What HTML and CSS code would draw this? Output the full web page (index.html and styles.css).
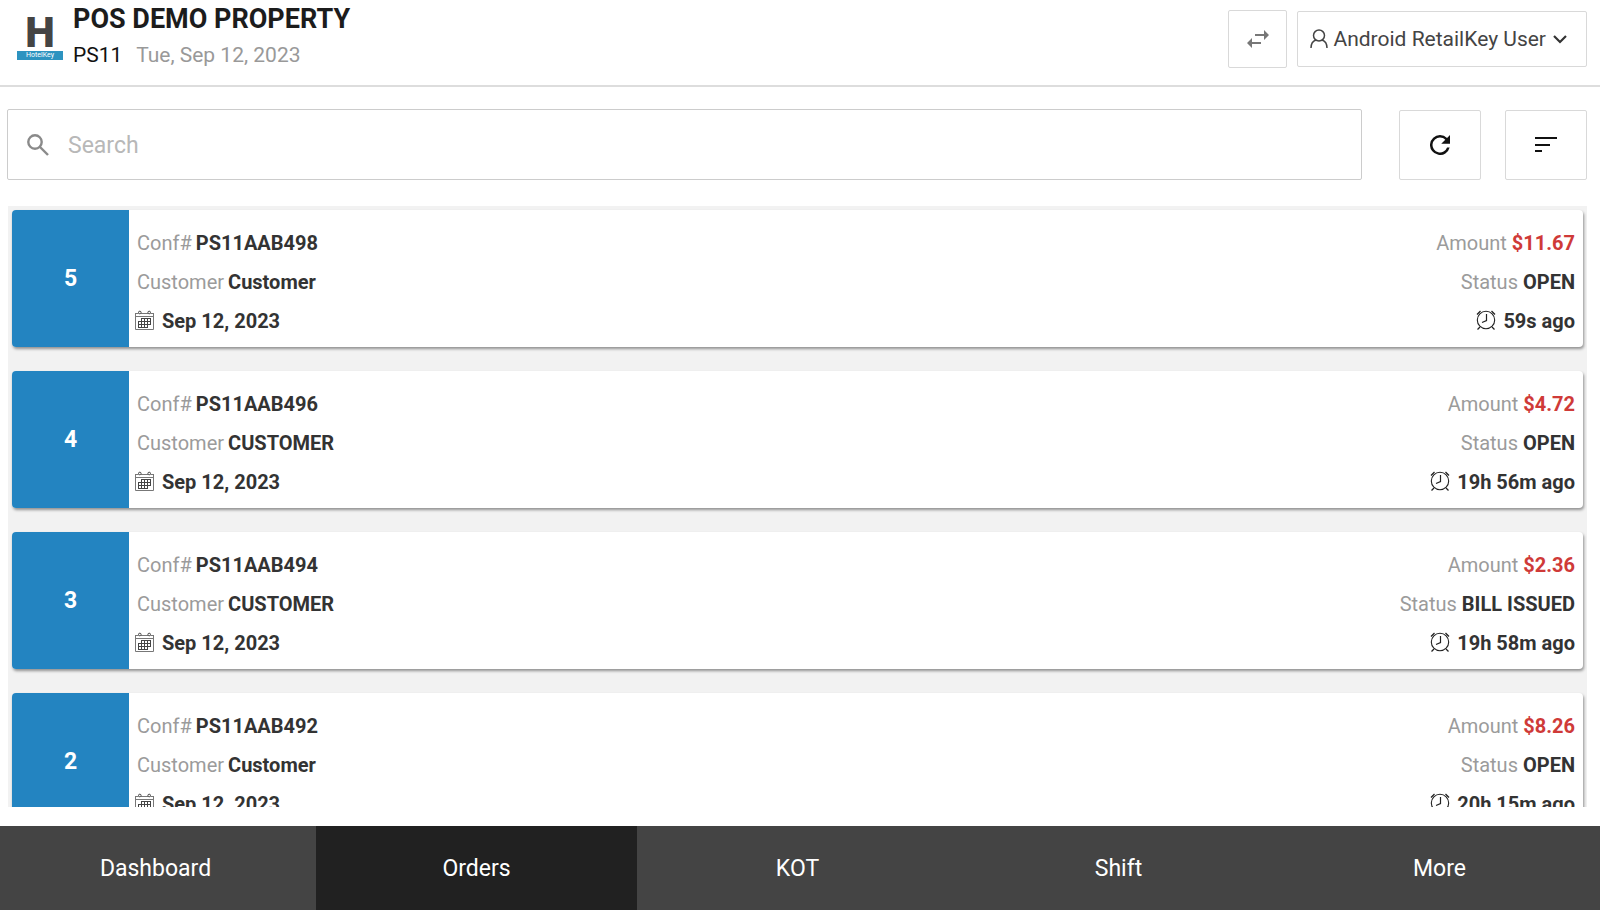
FILE: index.html
```html
<!DOCTYPE html>
<html lang="en">
<head>
    <meta charset="UTF-8">
    <meta name="viewport" content="width=device-width, initial-scale=1.0">
    <title>Orders - POS Demo Property</title>
    <link rel="stylesheet" href="styles.css">
</head>
<body>
    <!-- Shared icons -->
    <svg class="sprite" aria-hidden="true">
        <symbol id="calendar" viewBox="0 0 20 20">
            <path d="M.5 3v16.500h18V3M.5 3.500h3M6 3.500h7M15.500 3.500h3M1 6.500h17" fill="none" stroke="#777" />
            <circle cx="4.800" cy="2.500" r="1.300" fill="none" stroke="#444" />
            <circle cx="14.200" cy="2.500" r="1.300" fill="none" stroke="#444" />
            <path d="M6 8.500h10M3 11.500h13M3 14.500h13M3 17.500h10M3.500 11v7M6.500 8v10M9.500 8v10M12.500 8v10M15.500 8v7" fill="none" stroke="#444" />
        </symbol>
        <symbol id="clock" viewBox="0 0 20 20">
            <circle cx="10" cy="10" r="8.700" fill="none" stroke="#222" stroke-width="1.100" />
            <path d="M10.500 4v6.500L6 12.500" fill="none" stroke="#222" stroke-width="1.200" />
            <path d="M1 4.500L4.500 1M15.500 1L19 4.500M4 17l-2.500 2.500M16 17l2.500 2.500" fill="none" stroke="#222" stroke-width="1.300" />
        </symbol>
    </svg>

    <header class="header">
        <div class="logo">
            <span class="logo-letter">H</span>
            <span class="logo-name">HotelKey</span>
        </div>
        <div class="property">
            <h1>POS DEMO PROPERTY</h1>
            <p><span class="code">PS11</span> <span class="date">Tue, Sep 12, 2023</span></p>
        </div>
        <button class="box switch" type="button" aria-label="Switch property">
            <svg width="22" height="18" viewBox="0 0 22 18" fill="#777">
                <path d="M8 4h9V0l5 5-5 5V6H8zM14 12H5V8l-5 5 5 5v-4h9z" />
            </svg>
        </button>
        <button class="box user" type="button" aria-haspopup="menu">
            <svg width="18" height="20" viewBox="0 0 18 20" fill="none" stroke="#444" stroke-width="1.500">
                <circle cx="9" cy="6.500" r="5.500" />
                <path d="M1 19c0-4 2-7 5-8M17 19c0-4-2-7-5-8" />
            </svg>
            <span>Android RetailKey User</span>
            <svg class="chevron" width="14" height="9" viewBox="0 0 14 9" fill="none" stroke="#333" stroke-width="2.200">
                <path d="M1 1l6 6 6-6" />
            </svg>
        </button>
    </header>

    <div class="toolbar">
        <div class="search">
            <svg width="22" height="22" viewBox="0 0 22 22" fill="none" stroke="#8a8a8a" stroke-width="2.400">
                <circle cx="8" cy="8" r="6.700" />
                <path d="M13 13l8 8" />
            </svg>
            <input type="text" id="searchBox" placeholder="Search" aria-label="Search">
        </div>
        <button class="box tool" type="button" aria-label="Refresh">
            <svg width="20" height="20" viewBox="4 4 16 16" fill="#111">
                <path d="M17.650 6.350A7.960 7.960 0 0 0 12 4a8 8 0 1 0 7.730 10h-2.080A6 6 0 1 1 12 6c1.660 0 3.140.69 4.220 1.780L13 11h7V4z" />
            </svg>
        </button>
        <button class="box tool" type="button" aria-label="Sort">
            <svg width="24" height="16" viewBox="0 0 24 16" fill="#111">
                <path d="M1 0h22v2H1zM1 7h15v2H1zM1 13h7v2H1z" />
            </svg>
        </button>
    </div>

    <main class="orders">
        <article class="order">
            <div class="number">5</div>
            <div class="details">
                <p><span>Conf#</span><b>PS11AAB498</b></p>
                <p><span>Customer</span><b>Customer</b></p>
                <p class="when"><svg class="icon"><use href="#calendar" /></svg><b>Sep 12, 2023</b></p>
            </div>
            <div class="summary">
                <p><span>Amount</span><b class="amount">$11.67</b></p>
                <p><span>Status</span><b>OPEN</b></p>
                <p class="when"><svg class="icon"><use href="#clock" /></svg><b>59s ago</b></p>
            </div>
        </article>
        <article class="order">
            <div class="number">4</div>
            <div class="details">
                <p><span>Conf#</span><b>PS11AAB496</b></p>
                <p><span>Customer</span><b>CUSTOMER</b></p>
                <p class="when"><svg class="icon"><use href="#calendar" /></svg><b>Sep 12, 2023</b></p>
            </div>
            <div class="summary">
                <p><span>Amount</span><b class="amount">$4.72</b></p>
                <p><span>Status</span><b>OPEN</b></p>
                <p class="when"><svg class="icon"><use href="#clock" /></svg><b>19h 56m ago</b></p>
            </div>
        </article>
        <article class="order">
            <div class="number">3</div>
            <div class="details">
                <p><span>Conf#</span><b>PS11AAB494</b></p>
                <p><span>Customer</span><b>CUSTOMER</b></p>
                <p class="when"><svg class="icon"><use href="#calendar" /></svg><b>Sep 12, 2023</b></p>
            </div>
            <div class="summary">
                <p><span>Amount</span><b class="amount">$2.36</b></p>
                <p><span>Status</span><b>BILL ISSUED</b></p>
                <p class="when"><svg class="icon"><use href="#clock" /></svg><b>19h 58m ago</b></p>
            </div>
        </article>
        <article class="order">
            <div class="number">2</div>
            <div class="details">
                <p><span>Conf#</span><b>PS11AAB492</b></p>
                <p><span>Customer</span><b>Customer</b></p>
                <p class="when"><svg class="icon"><use href="#calendar" /></svg><b>Sep 12, 2023</b></p>
            </div>
            <div class="summary">
                <p><span>Amount</span><b class="amount">$8.26</b></p>
                <p><span>Status</span><b>OPEN</b></p>
                <p class="when"><svg class="icon"><use href="#clock" /></svg><b>20h 15m ago</b></p>
            </div>
        </article>
    </main>

    <nav class="tabs">
        <a href="#dashboard">Dashboard</a>
        <a href="#orders" class="active">Orders</a>
        <a href="#kot">KOT</a>
        <a href="#shift">Shift</a>
        <a href="#more">More</a>
    </nav>
</body>
</html>
```

FILE: styles.css
```css
* {
    box-sizing: border-box;
}
body {
    font-family: Roboto, Arial, sans-serif;
    font-size: 20px;
    margin: 0;
    height: 100vh;
    display: flex;
    flex-direction: column;
    overflow: hidden;
    background: #fff;
    color: #333;
}
h1, p {
    margin: 0;
}
svg {
    flex: none;
}
.sprite {
    display: none;
}
.header {
    display: flex;
    align-items: flex-start;
    gap: 10px;
    height: 87px;
    flex: none;
    padding: 0 13px 0 17px;
    border-bottom: 2px solid #ddd;
}
.logo {
    width: 46px;
    padding-top: 14px;
    text-align: center;
}
.logo-letter {
    display: block;
    font-size: 42px;
    line-height: 37px;
    font-weight: 900;
    color: #444;
}
.logo-name {
    display: block;
    background: #2d93c0;
    color: #fff;
    font-size: 7px;
    line-height: 9px;
}
.property {
    flex: 1;
}
.property h1 {
    font-size: 27px;
    line-height: 38px;
    font-weight: 700;
    color: #1c1c1c;
}
.property p {
    font-size: 21px;
    line-height: 34px;
}
.code {
    color: #111;
    margin-right: 9px;
}
.date {
    color: #999;
}
.box {
    display: flex;
    align-items: center;
    justify-content: center;
    padding: 0;
    background: #fff;
    border: 1px solid #d9d9d9;
    border-radius: 2px;
    cursor: pointer;
}
.switch {
    width: 59px;
    height: 58px;
    margin-top: 10px;
}
.user {
    height: 56px;
    margin-top: 11px;
    padding: 0 19px 0 12px;
    gap: 5px;
    font-family: inherit;
    font-size: 21px;
    color: #444;
}
.chevron {
    margin-left: 2px;
}
.toolbar {
    display: flex;
    flex: none;
    gap: 24px;
    height: 71px;
    margin: 22px 13px 26px 7px;
}
.search {
    flex: 1;
    display: flex;
    align-items: center;
    margin-right: 13px;
    padding-left: 19px;
    border: 1px solid #ccc;
    border-radius: 2px;
}
.search input {
    flex: 1;
    align-self: stretch;
    padding: 2px 0 0 19px;
    border: 0;
    outline: none;
    background: none;
    font-family: inherit;
    font-size: 23px;
    color: #333;
}
.search input::placeholder {
    color: #b8b8b8;
}
.tool {
    width: 82px;
    height: 70px;
    margin-top: 1px;
}
.orders {
    flex: 1;
    min-height: 0;
    overflow-y: auto;
    scrollbar-width: none;
    margin: 0 13px 19px 8px;
    padding: 4px 4px 0;
    background: #f2f2f2;
}
.order {
    display: flex;
    height: 137px;
    margin-bottom: 24px;
    background: #fff;
    border-radius: 4px;
    box-shadow: 1px 2px 3px rgba(0, 0, 0, 0.4);
}
.number {
    width: 117px;
    display: flex;
    align-items: center;
    justify-content: center;
    background: #2384c1;
    border-radius: 4px 0 0 4px;
    color: #fff;
    font-size: 23px;
    font-weight: 700;
}
.details {
    flex: 1;
    padding: 14px 0 0 8px;
}
.summary {
    padding: 14px 8px 0 0;
}
.order p {
    display: flex;
    align-items: center;
    gap: 4px;
    line-height: 39px;
}
.summary p {
    justify-content: flex-end;
    gap: 5px;
}
.order span {
    color: #9b9b9b;
}
.order b {
    font-weight: 700;
}
.order .amount {
    color: #cf3a38;
}
.order .when {
    gap: 7px;
}
.details .when {
    margin-left: -2px;
}
.icon {
    width: 20px;
    height: 20px;
    margin-bottom: 3px;
}
.tabs {
    display: flex;
    flex: none;
    height: 84px;
    margin-left: -5px;
    background: #444;
}
.tabs a {
    flex: 1;
    display: flex;
    align-items: center;
    justify-content: center;
    color: #fff;
    font-size: 23px;
    text-decoration: none;
}
.tabs .active {
    background: #212121;
}
```
